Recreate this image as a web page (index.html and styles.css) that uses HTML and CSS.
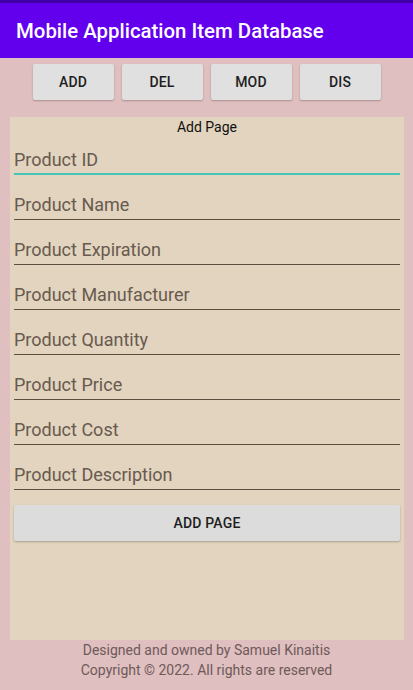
FILE: index.html
```html
<!DOCTYPE html>
<html>
<head>
<meta charset="utf-8">
<link rel="stylesheet" href="styles.css">
</head>
<body>
<div class="status"></div>
<header class="appbar">Mobile Application Item Database</header>
<nav class="tabs">
  <button class="btn tab">ADD</button>
  <button class="btn tab">DEL</button>
  <button class="btn tab">MOD</button>
  <button class="btn tab">DIS</button>
</nav>
<main class="panel">
  <div class="page-title">Add Page</div>
  <div class="field first">Product ID</div>
  <div class="field">Product Name</div>
  <div class="field">Product Expiration</div>
  <div class="field">Product Manufacturer</div>
  <div class="field">Product Quantity</div>
  <div class="field">Product Price</div>
  <div class="field">Product Cost</div>
  <div class="field">Product Description</div>
  <button class="btn submit">ADD PAGE</button>
</main>
<footer class="footer">
  <div>Designed and owned by Samuel Kinaitis</div>
  <div>Copyright © 2022. All rights are reserved</div>
</footer>
</body>
</html>
```
FILE: styles.css
```css
* { box-sizing: border-box; }
html, body {
  margin: 0;
  padding: 0;
}
body {
  width: 413px;
  height: 690px;
  background: #dfbfbf;
  font-family: Roboto, "Noto Sans", sans-serif;
  overflow: hidden;
}
.status {
  height: 3px;
  background: #3f00a8;
}
.appbar {
  height: 55px;
  background: #6200ee;
  color: #fff;
  font-size: 20.4px;
  font-weight: 500;
  padding-left: 16px;
  line-height: 56px;
}
.tabs {
  display: flex;
  justify-content: center;
  gap: 8px;
  margin-top: 6px;
}
.btn {
  font-family: Roboto, "Noto Sans", sans-serif;
  font-size: 14px;
  font-weight: 500;
  color: #1e1e1e;
  background: #e0e0e0;
  border: none;
  border-radius: 2px;
  box-shadow: 0 1px 2px rgba(0,0,0,0.25);
  height: 36px;
  padding: 0;
  letter-spacing: 0.2px;
}
.tab {
  width: 81px;
}
.panel {
  margin: 17px 9px 0 10px;
  height: 523px;
  background: #e2d4bf;
  padding: 0 4px;
  display: flex;
  flex-direction: column;
}
.page-title {
  text-align: center;
  font-size: 14px;
  line-height: 20px;
  color: #111;
}
.field {
  font-size: 18px;
  color: #685a4e;
  line-height: 24px;
  padding: 18px 0 2px 0;
  border-bottom: 1px solid #5e4c40;
}
.field.first {
  padding-top: 11px;
  padding-bottom: 1px;
  border-bottom: 2px solid #45c6b6;
}
.submit {
  margin-top: 15px;
  width: 100%;
  background: #dcdcdc;
}
.footer {
  text-align: center;
  font-size: 14px;
  line-height: 20px;
  color: #6e5a5a;
}
```
